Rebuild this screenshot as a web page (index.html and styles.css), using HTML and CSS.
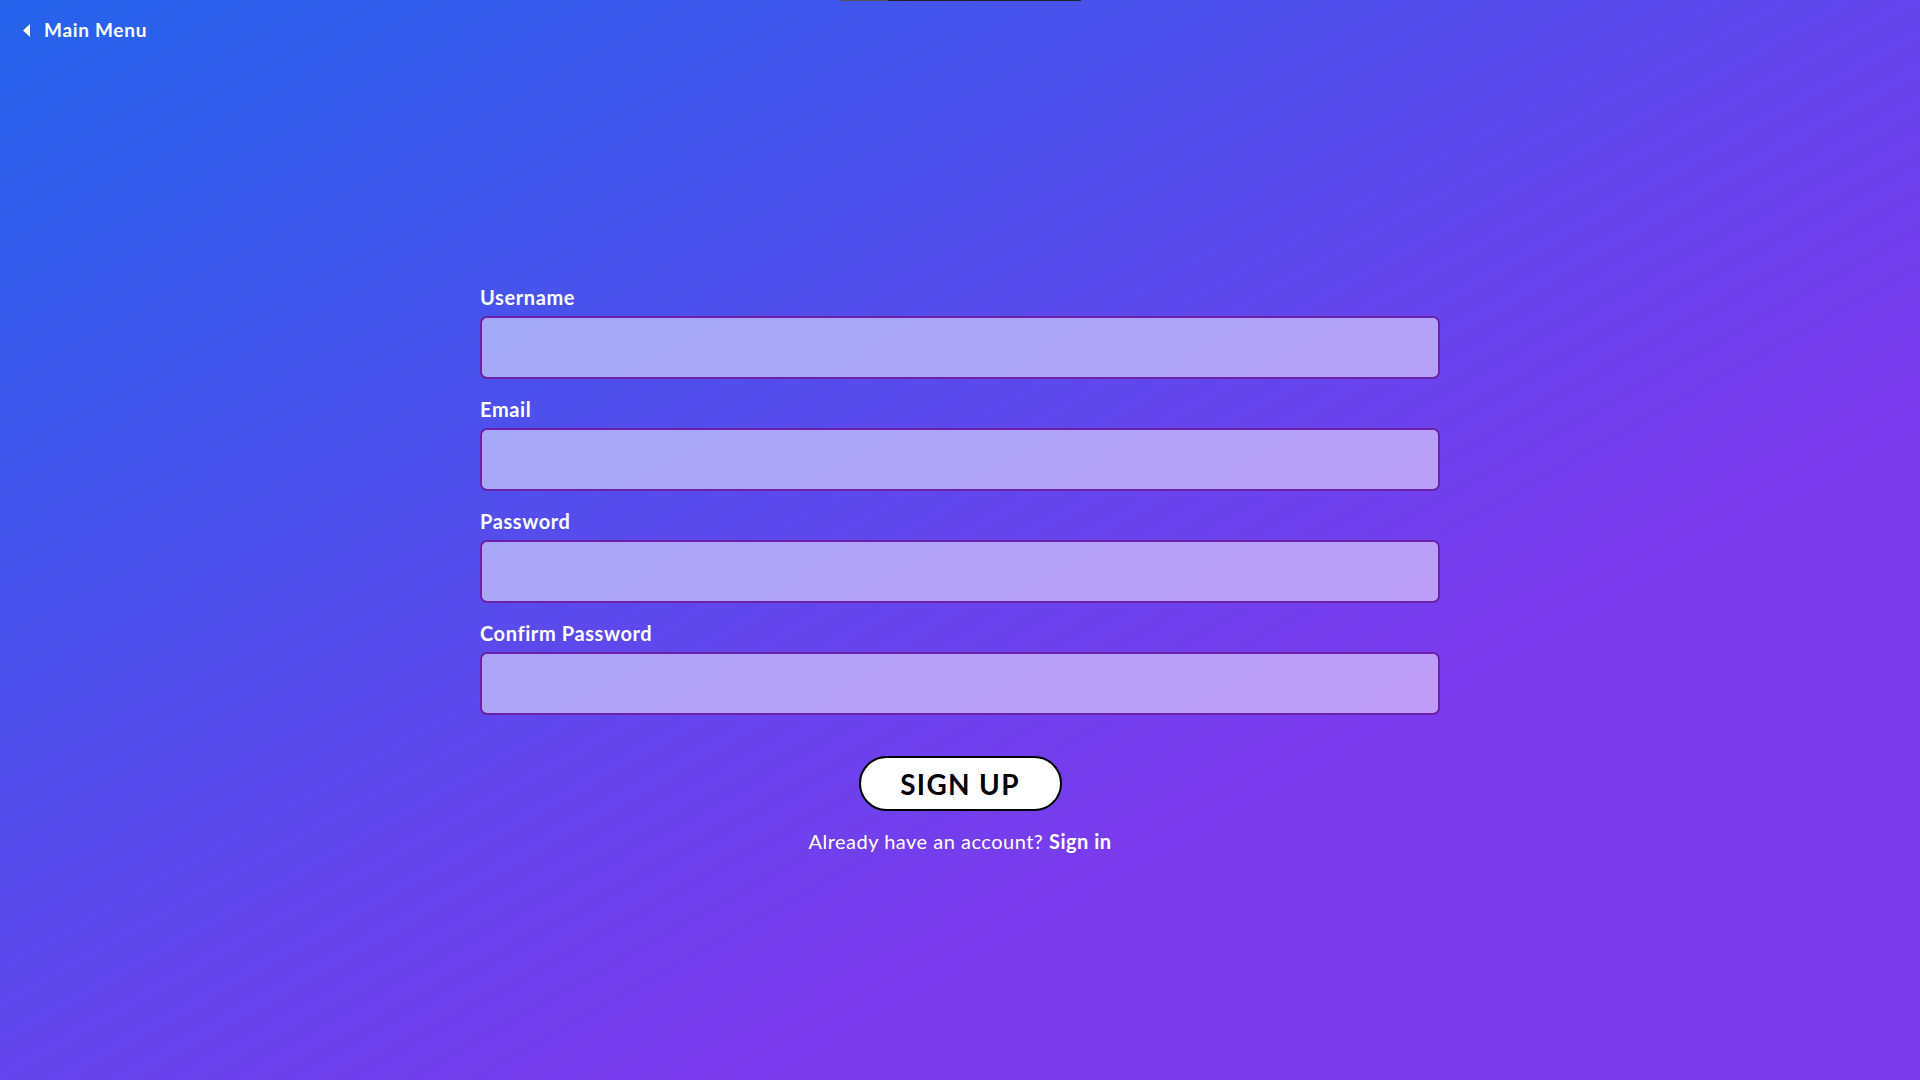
FILE: index.html
```html
<!DOCTYPE html>
<html lang="en">
<head>
<meta charset="utf-8">
<title>Sign Up</title>
<link rel="stylesheet" href="styles.css">
</head>
<body>
<div class="page">
  <div class="topline"><span class="topline-done"></span></div>
  <header class="topbar">
    <a class="back" href="#">
      <svg class="back-icon" width="7" height="13" viewBox="0 0 7 13"><path d="M7 0 L7 13 L0 6.5 Z" fill="#fff"/></svg>
      <span>Main Menu</span>
    </a>
  </header>
  <main class="content">
    <form class="form">
      <div class="field">
        <label class="label" for="u">Username</label>
        <input class="input" id="u" type="text">
      </div>
      <div class="field">
        <label class="label" for="e">Email</label>
        <input class="input" id="e" type="email">
      </div>
      <div class="field">
        <label class="label" for="p">Password</label>
        <input class="input" id="p" type="password">
      </div>
      <div class="field">
        <label class="label" for="c">Confirm Password</label>
        <input class="input" id="c" type="password">
      </div>
      <div class="actions">
        <button class="btn" type="button">SIGN UP</button>
        <p class="alt">Already have an account? <a href="#" class="alt-link">Sign in</a></p>
      </div>
    </form>
  </main>
</div>
</body>
</html>
```
FILE: styles.css
```css
* { box-sizing: border-box; }
html, body { margin: 0; padding: 0; height: 100%; }
body {
  font-family: "Lato", "Open Sans", sans-serif;
  color: #fff;
  background: linear-gradient(to bottom right, #2563eb 0%, #7c3aed 70%, #7c3aed 100%);
  min-height: 1080px;
}
.page {
  position: relative;
  min-height: 1080px;
  display: flex;
  flex-direction: column;
}
.topline {
  position: absolute;
  top: 0;
  left: 840px;
  width: 241px;
  height: 1px;
  background: #222;
}
.topline-done {
  display: block;
  width: 48px;
  height: 1px;
  background: #555;
}
.topbar {
  padding: 18px 23px 0;
  height: 44px;
}
.back {
  display: inline-flex;
  align-items: center;
  gap: 14px;
  color: #fff;
  text-decoration: none;
  font-weight: 700;
  font-size: 19px;
  line-height: 24px;
  letter-spacing: 0.7px;
}
.back-icon { display: block; margin-top: 0; }
.content {
  display: flex;
  justify-content: center;
  padding-top: 241px;
}
.form {
  width: 960px;
  display: flex;
  flex-direction: column;
  gap: 18px;
}
.field {
  display: flex;
  flex-direction: column;
  gap: 7px;
}
.label {
  font-weight: 700;
  font-size: 20px;
  line-height: 24px;
  letter-spacing: 0.6px;
}
.input {
  height: 63px;
  width: 100%;
  border: 2px solid #6b21a8;
  border-radius: 7px;
  background: rgba(255,255,255,0.5);
  font: inherit;
  padding: 0 14px;
}
.actions {
  display: flex;
  flex-direction: column;
  align-items: center;
  padding-top: 23px;
}
.btn {
  width: 203px;
  height: 55px;
  border: 2px solid #000;
  border-radius: 28px;
  background: #fff;
  color: #000;
  font-family: inherit;
  font-weight: 700;
  font-size: 28px;
  letter-spacing: 1.3px;
  cursor: pointer;
}
.alt {
  margin: 18px 0 0;
  font-size: 20px;
  line-height: 24px;
  font-weight: 400;
  letter-spacing: 0.5px;
}
.alt-link {
  color: #fff;
  font-weight: 700;
  text-decoration: none;
}
```
